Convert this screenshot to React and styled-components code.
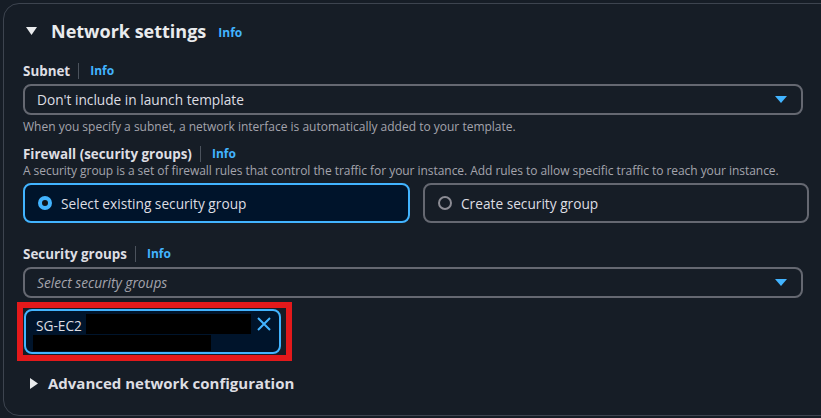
import React from "react";
import styled, { createGlobalStyle } from "styled-components";

const Global = createGlobalStyle`
  html, body { margin: 0; padding: 0; background: #161d26; }
  body { font-family: "Open Sans", "Noto Sans", Arial, sans-serif; color: #c6c6cd; overflow: hidden; }
  * { box-sizing: border-box; }
`;

const Page = styled.div`
  width: 821px;
  height: 418px;
  padding: 3px 0 0 3px;
  overflow: hidden;
`;

const Card = styled.section`
  width: 860px;
  height: 413px;
  border: 1px solid #3d444f;
  border-radius: 16px;
  padding: 15px 0 0 19px;
  display: flex;
  flex-direction: column;
`;

const Header = styled.div`
  display: flex;
  align-items: center;
  height: 24px;
  margin-left: 3px;
`;

const Caret = styled.svg`
  flex: none;
  display: block;
`;

const Title = styled.h2`
  margin: 0 0 0 14px;
  font-size: 18px;
  line-height: 24px;
  font-weight: 700;
  color: #e9ebed;
`;

const InfoLink = styled.span`
  font-size: 12px;
  font-weight: 700;
  color: #42b4ff;
  margin-left: ${(p) => p.$gap || 0}px;
  line-height: 16px;
  padding-top: ${(p) => p.$top || 0}px;
`;

const LabelRow = styled.div`
  display: flex;
  align-items: center;
  height: 18px;
  margin-top: ${(p) => p.$mt}px;
`;

const Label = styled.span`
  font-size: 13.4px;
  font-weight: 700;
  color: #dedee3;
  line-height: 18px;
`;

const Divider = styled.span`
  width: 1px;
  height: 16px;
  background: #4b525c;
  margin: 0 11px 0 8px;
`;

const Select = styled.div`
  width: 780px;
  height: 31px;
  margin-top: 4px;
  border: 2px solid #656871;
  border-radius: 8px;
  display: flex;
  align-items: center;
  justify-content: space-between;
  padding: 0 14px 0 12px;
  font-size: 13.7px;
  color: ${(p) => (p.$placeholder ? "#a4a4ad" : "#dedee3")};
  font-style: ${(p) => (p.$placeholder ? "italic" : "normal")};
`;

const Help = styled.div`
  font-size: 12px;
  line-height: 16px;
  color: #a4a4ad;
  letter-spacing: ${(p) => p.$ls || 0}px;
  margin-top: ${(p) => p.$mt}px;
`;

const Tiles = styled.div`
  display: grid;
  grid-template-columns: 387px 386px;
  column-gap: 13px;
  margin-top: 4px;
`;

const Tile = styled.div`
  height: 40px;
  border: 2px solid ${(p) => (p.$selected ? "#42b4ff" : "#656871")};
  background: ${(p) => (p.$selected ? "#00142b" : "transparent")};
  border-radius: 8px;
  display: flex;
  align-items: center;
  padding-left: 13px;
  gap: 9px;
  font-size: 13.7px;
  color: #dedee3;
`;

const Radio = styled.span`
  width: 14px;
  height: 14px;
  border-radius: 50%;
  flex: none;
  border: ${(p) => (p.$checked ? "4px solid #42b4ff" : "2px solid #8c8c94")};
  background: ${(p) => (p.$checked ? "#0f141a" : "transparent")};
`;

const Highlight = styled.div`
  align-self: flex-start;
  margin: 4px 0 0 -6px;
  border: 6px solid #e3191b;
  padding: 1px 5px 1px 1px;
`;

const Token = styled.div`
  width: 257px;
  height: 45px;
  border: 2px solid #42b4ff;
  background: #00142b;
  border-radius: 8px;
  padding: 3px 8px 0 7px;
  display: flex;
  flex-direction: column;
`;

const TokenRow = styled.div`
  display: flex;
  align-items: flex-start;
`;

const TokenText = styled.span`
  font-size: 13.7px;
  line-height: 19px;
  color: #dedee3;
  margin-left: 3px;
  margin-top: 2px;
`;

const Redact = styled.span`
  display: block;
  flex: none;
  background: #000;
  width: ${(p) => p.$w}px;
  height: ${(p) => p.$h}px;
  margin-left: ${(p) => p.$ml}px;
  margin-top: ${(p) => p.$mt || 0}px;
`;

const Close = styled.svg`
  margin-left: auto;
  margin-top: 3px;
  display: block;
  flex: none;
`;

const Expander = styled.div`
  display: flex;
  align-items: center;
  margin-top: 12px;
  margin-left: 7px;
  height: 20px;
`;

const ExpanderText = styled.span`
  font-size: 15px;
  font-weight: 700;
  color: #dedee3;
  margin-left: 10px;
`;

const BlueCaret = () => (
  <svg width="12" height="7" viewBox="0 0 12 7" style={{ display: "block" }}>
    <path d="M0 0 H12 L6 7 Z" fill="#42b4ff" />
  </svg>
);

export default function App() {
  return (
    <>
      <Global />
      <Page>
        <Card>
          <Header>
            <Caret width="11" height="8" viewBox="0 0 11 8">
              <path d="M0 0 H11 L5.5 8 Z" fill="#e9ebed" />
            </Caret>
            <Title>Network settings</Title>
            <InfoLink $gap={12} $top={4}>Info</InfoLink>
          </Header>

          <LabelRow $mt={19}>
            <Label>Subnet</Label>
            <Divider />
            <InfoLink>Info</InfoLink>
          </LabelRow>
          <Select>
            <span>Don't include in launch template</span>
            <BlueCaret />
          </Select>
          <Help $mt={4}>When you specify a subnet, a network interface is automatically added to your template.</Help>

          <LabelRow $mt={10}>
            <Label>Firewall (security groups)</Label>
            <Divider />
            <InfoLink>Info</InfoLink>
          </LabelRow>
          <Help $mt={0} $ls={-0.05}>
            A security group is a set of firewall rules that control the traffic for your instance. Add rules to allow specific traffic to reach your instance.
          </Help>
          <Tiles>
            <Tile $selected>
              <Radio $checked />
              <span>Select existing security group</span>
            </Tile>
            <Tile>
              <Radio />
              <span>Create security group</span>
            </Tile>
          </Tiles>

          <LabelRow $mt={22}>
            <Label>Security groups</Label>
            <Divider />
            <InfoLink>Info</InfoLink>
          </LabelRow>
          <Select $placeholder>
            <span>Select security groups</span>
            <BlueCaret />
          </Select>

          <Highlight>
            <Token>
              <TokenRow>
                <TokenText>SG-EC2</TokenText>
                <Redact $w={165} $h={20} $ml={4} />
                <Close width="14" height="14" viewBox="0 0 14 14">
                  <path d="M1 1 L13 13 M13 1 L1 13" stroke="#42b4ff" strokeWidth="2" />
                </Close>
              </TokenRow>
              <Redact $w={178} $h={16} $ml={0} />
            </Token>
          </Highlight>

          <Expander>
            <svg width="8" height="11" viewBox="0 0 8 11" style={{ display: "block" }}>
              <path d="M0 0 L8 5.5 L0 11 Z" fill="#e9ebed" />
            </svg>
            <ExpanderText>Advanced network configuration</ExpanderText>
          </Expander>
        </Card>
      </Page>
    </>
  );
}
